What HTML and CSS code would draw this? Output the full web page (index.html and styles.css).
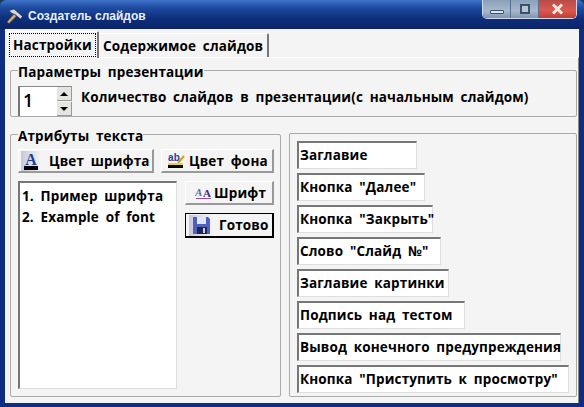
FILE: index.html
```html
<!DOCTYPE html>
<html lang="ru">
<head>
    <meta charset="UTF-8">
    <title>Создатель слайдов</title>
    <link rel="stylesheet" href="styles.css">
</head>
<body>
    <div class="window">
        <div class="titlebar">
            <svg class="app-icon" width="18" height="16" viewBox="0 0 18 16">
                <path d="M1 14 L8 6 L10.5 8 L3 15.5 Z" fill="#d8b070" stroke="#5a3c18" stroke-width=".5"/>
                <path d="M3 2.5 L8 1 L16.5 8.5 L14.5 11 L9 6.5 L6 5.5 Z" fill="#d4d8dc" stroke="#20242c" stroke-width=".6"/>
            </svg>
            <span class="title">Создатель слайдов</span>
            <div class="caption">
                <div class="cap-btn cap-min"><span class="min-glyph"></span></div>
                <div class="cap-btn cap-max"><span class="max-glyph"></span></div>
                <div class="cap-btn cap-close">
                    <svg width="13" height="12" viewBox="0 0 13 12"><path d="M2 1.5 L11 10.5 M11 1.5 L2 10.5" stroke="#f4e6e0" stroke-width="3"/></svg>
                </div>
            </div>
        </div>
        <div class="client">
            <div class="tabs">
                <div class="tab active"><span class="focus">Настройки</span></div>
                <div class="tab">Содержимое слайдов</div>
            </div>
            <div class="page">
                <fieldset class="group params">
                    <legend>Параметры презентации</legend>
                    <div class="spinner">
                        <div class="spin-value">1</div>
                        <div class="spin-btns">
                            <div class="spin-btn"><span class="arrow-up"></span></div>
                            <div class="spin-btn"><span class="arrow-down"></span></div>
                        </div>
                    </div>
                    <span class="count-label">Количество слайдов в презентации(с начальным слайдом)</span>
                </fieldset>
                <div class="lower">
                    <fieldset class="group attrs">
                        <legend>Атрибуты текста</legend>
                        <div class="btn-row">
                            <div class="btn btn-color">
                                <svg width="20" height="20" viewBox="0 0 20 20">
                                    <defs>
                                        <linearGradient id="fade">
                                            <stop offset="0" stop-color="#c4c8dc"/>
                                            <stop offset="1" stop-color="#f4f4f4"/>
                                        </linearGradient>
                                    </defs>
                                    <rect width="20" height="20" fill="url(#fade)"/>
                                    <text x="10" y="14" text-anchor="middle" font-family="Liberation Serif" font-weight="700" font-size="16" fill="#1f3f8f">A</text>
                                    <rect x="3" y="15" width="14" height="4" fill="#000"/>
                                </svg>
                                Цвет шрифта
                            </div>
                            <div class="btn btn-back">
                                <svg width="18" height="18" viewBox="0 0 18 18">
                                    <text x="0" y="9" font-family="Liberation Sans" font-size="10" fill="#2a3f8f">ab</text>
                                    <path d="M10 11 L16 4" stroke="#c9a020" stroke-width="2"/>
                                    <rect x="0" y="11" width="15" height="2" fill="#e8d820"/>
                                    <rect x="0" y="13" width="15" height="3" fill="#000"/>
                                </svg>
                                Цвет фона
                            </div>
                        </div>
                        <div class="attrs-body">
                            <div class="sample">
                                <div>1. Пример шрифта</div>
                                <div>2. Example of font</div>
                            </div>
                            <div class="side-btns">
                                <div class="btn btn-font">
                                    <svg width="17" height="17" viewBox="0 0 17 17">
                                        <text x="0" y="12" font-family="Liberation Serif" font-style="italic" font-size="11" fill="#5a6fb0">A</text>
                                        <text x="8" y="13" font-family="Liberation Serif" font-weight="700" font-size="11" fill="#3a2f80">A</text>
                                        <rect x="1" y="14" width="15" height="1" fill="#9a4fa0"/>
                                    </svg>
                                    Шрифт
                                </div>
                                <div class="btn btn-done">
                                    <svg width="24" height="21" viewBox="0 0 24 21">
                                        <rect width="24" height="21" fill="url(#fade)"/>
                                        <path d="M4 2 H19 L21 4 V19 H4 Z" fill="#5060b8"/>
                                        <rect x="8" y="2" width="9" height="7" fill="#dfe4f6"/>
                                        <rect x="8" y="12" width="10" height="7" fill="#1c2458"/>
                                        <rect x="14" y="13" width="2" height="5" fill="#c8cce0"/>
                                    </svg>
                                    <span>Готово</span>
                                </div>
                            </div>
                        </div>
                    </fieldset>
                    <div class="group fields">
                        <div class="field w120">Заглавие</div>
                        <div class="field w128">Кнопка "Далее"</div>
                        <div class="field w136">Кнопка "Закрыть"</div>
                        <div class="field w144">Слово "Слайд №"</div>
                        <div class="field w152">Заглавие картинки</div>
                        <div class="field w168">Подпись над тестом</div>
                        <div class="field w264">Вывод конечного предупреждения</div>
                        <div class="field w272">Кнопка "Приступить к просмотру"</div>
                    </div>
                </div>
            </div>
        </div>
    </div>
</body>
</html>
```

FILE: styles.css
```css
html, body {
    margin: 0;
    height: 100%;
    overflow: hidden;
}
body {
    background: #1a3a5a;
    font-family: "Open Sans", sans-serif;
    font-size: 13.5px;
    font-weight: 700;
    letter-spacing: .15px;
    word-spacing: 3px;
    color: #000;
}
.window {
    width: 584px;
    height: 407px;
    box-sizing: border-box;
    background: #0f2d80;
    border-radius: 6px 6px 0 0;
    padding: 0 5px 4px 5px;
    display: flex;
    flex-direction: column;
}
.titlebar {
    height: 29px;
    flex: none;
    margin: 0 -5px;
    padding: 0 7px 0 6px;
    display: flex;
    border-radius: 6px 6px 0 0;
    background: linear-gradient(#3f74c8 0, #1d4aa0 8px, #0e2f7c 18px, #0a2468 29px);
}
.app-icon {
    margin-top: 8px;
    flex: none;
}
.title {
    margin: 9px 0 0 4px;
    font-family: "Liberation Sans", sans-serif;
    font-size: 12px;
    font-weight: 700;
    letter-spacing: 0;
    word-spacing: 0;
    line-height: 15px;
    color: #e8f0ff;
}
.caption {
    margin-left: auto;
    width: 95px;
    height: 19px;
    box-sizing: border-box;
    display: flex;
    border: 1px solid #d0d8e8;
    border-top: 0;
    border-radius: 0 0 5px 5px;
    overflow: hidden;
}
.cap-btn {
    display: flex;
    align-items: center;
    justify-content: center;
}
.cap-min, .cap-max {
    width: 27px;
    background: linear-gradient(#8aa0bc, #a8b8c8 60%, #7f96b4);
    border-right: 1px solid #5a7090;
}
.cap-close {
    flex: 1;
    background: linear-gradient(#b84a48, #d85a50 55%, #c83c34);
}
.min-glyph {
    width: 14px;
    height: 4px;
    margin-top: 6px;
    background: #dfe5ec;
    border: 1px solid #39506e;
    box-sizing: border-box;
    border-radius: 1px;
}
.max-glyph {
    width: 10px;
    height: 10px;
    box-sizing: border-box;
    border: 2px solid #39506e;
    background: #b8c4d0;
}
.client {
    flex: 1;
    min-height: 0;
    background: #f4f4f4;
    display: flex;
    flex-direction: column;
}
.tabs {
    display: flex;
    align-items: flex-end;
    height: 26px;
    margin-top: 2px;
    flex: none;
    padding-left: 2px;
}
.tab {
    height: 24px;
    line-height: 24px;
    padding: 0 4px;
    box-sizing: border-box;
    background: #f4f4f4;
    border-top: 1px solid #fff;
    border-right: 2px solid #777;
    border-radius: 2px 2px 0 0;
}
.tab.active {
    height: 27px;
    width: 92px;
    padding: 1px 1px 0 1px;
    border-left: 1px solid #fff;
    position: relative;
    z-index: 1;
    margin-bottom: -1px;
}
.focus {
    display: block;
    height: 24px;
    line-height: 22px;
    box-sizing: border-box;
    border: 1px dotted #000;
    text-align: center;
}
.page {
    flex: 1;
    min-height: 0;
    box-sizing: border-box;
    border-top: 1px solid #fff;
    border-right: 1px solid #888;
    padding: 4px 1px 6px 5px;
    display: flex;
    flex-direction: column;
}
.group {
    margin: 0;
    min-width: 0;
    box-sizing: border-box;
    border: 1px solid #aaa;
    border-radius: 2px;
    padding: 0;
}
legend {
    padding: 0;
    line-height: 17px;
    transform: translateY(2px);
    background: #f4f4f4;
}
.params {
    height: 55px;
    padding: 0 0 0 7px;
    display: flex;
    align-items: flex-start;
    flex: none;
}
.spinner {
    width: 54px;
    height: 30px;
    margin-top: 7px;
    box-sizing: border-box;
    display: flex;
    background: #fff;
    border-top: 1px solid #888;
    border-left: 2px solid #777;
}
.spin-value {
    flex: 1;
    padding-left: 3px;
    font-size: 18px;
    font-weight: 600;
    line-height: 27px;
}
.spin-btns {
    width: 15px;
    display: flex;
    flex-direction: column;
    gap: 1px;
    background: #f4f4f4;
}
.spin-btn {
    flex: 1;
    background: #e4e4e0;
    border-right: 1px solid #999;
    border-bottom: 1px solid #999;
    display: flex;
    align-items: center;
    justify-content: center;
}
.arrow-up {
    border: 4px solid transparent;
    border-top: 0;
    border-bottom: 4px solid #000;
}
.arrow-down {
    border: 4px solid transparent;
    border-bottom: 0;
    border-top: 4px solid #000;
}
.count-label {
    margin: 8px 0 0 9px;
    line-height: 20px;
    white-space: nowrap;
}
.lower {
    flex: 1;
    min-height: 0;
    display: flex;
    gap: 8px;
    margin-top: 9px;
}
.attrs {
    width: 271px;
    padding: 0 0 7px 7px;
    display: flex;
    flex-direction: column;
}
.btn-row {
    display: flex;
    gap: 7px;
    margin-top: 6px;
}
.btn {
    height: 24px;
    box-sizing: border-box;
    display: flex;
    align-items: center;
    white-space: nowrap;
    background: #f4f4f4;
    border-top: 1px solid #fff;
    border-left: 1px solid #fff;
    border-right: 2px solid #999;
    border-bottom: 2px solid #999;
}
.btn-color {
    width: 136px;
    gap: 8px;
    padding-left: 2px;
}
.btn-back {
    width: 113px;
    gap: 3px;
    padding-left: 6px;
}
.attrs-body {
    flex: 1;
    min-height: 0;
    display: flex;
    gap: 8px;
    margin-top: 8px;
}
.sample {
    width: 159px;
    box-sizing: border-box;
    background: #fff;
    border-top: 2px solid #777;
    border-left: 2px solid #777;
    border-right: 1px solid #ddd;
    border-bottom: 1px solid #ddd;
    padding: 3px 0 0 2px;
    line-height: 21px;
    white-space: nowrap;
}
.side-btns {
    width: 89px;
    display: flex;
    flex-direction: column;
    gap: 8px;
}
.btn-font {
    gap: 2px;
    padding-left: 9px;
}
.btn-done {
    height: 25px;
    border: 1px solid #000;
    border-right-width: 2px;
    border-bottom-width: 2px;
    padding-left: 3px;
    gap: 6px;
}
.fields {
    flex: 1;
    margin-top: 7px;
    display: flex;
    flex-direction: column;
    gap: 4px;
    padding: 7px 0 0 7px;
}
.field {
    height: 28px;
    line-height: 25px;
    box-sizing: border-box;
    background: #fff;
    border-top: 2px solid #777;
    border-left: 2px solid #777;
    border-right: 1px solid #ddd;
    border-bottom: 1px solid #ddd;
    padding-left: 1px;
    white-space: nowrap;
}
.w120 { width: 120px; }
.w128 { width: 128px; }
.w136 { width: 136px; }
.w144 { width: 144px; }
.w152 { width: 152px; }
.w168 { width: 168px; }
.w264 { width: 264px; }
.w272 { width: 272px; }
```
